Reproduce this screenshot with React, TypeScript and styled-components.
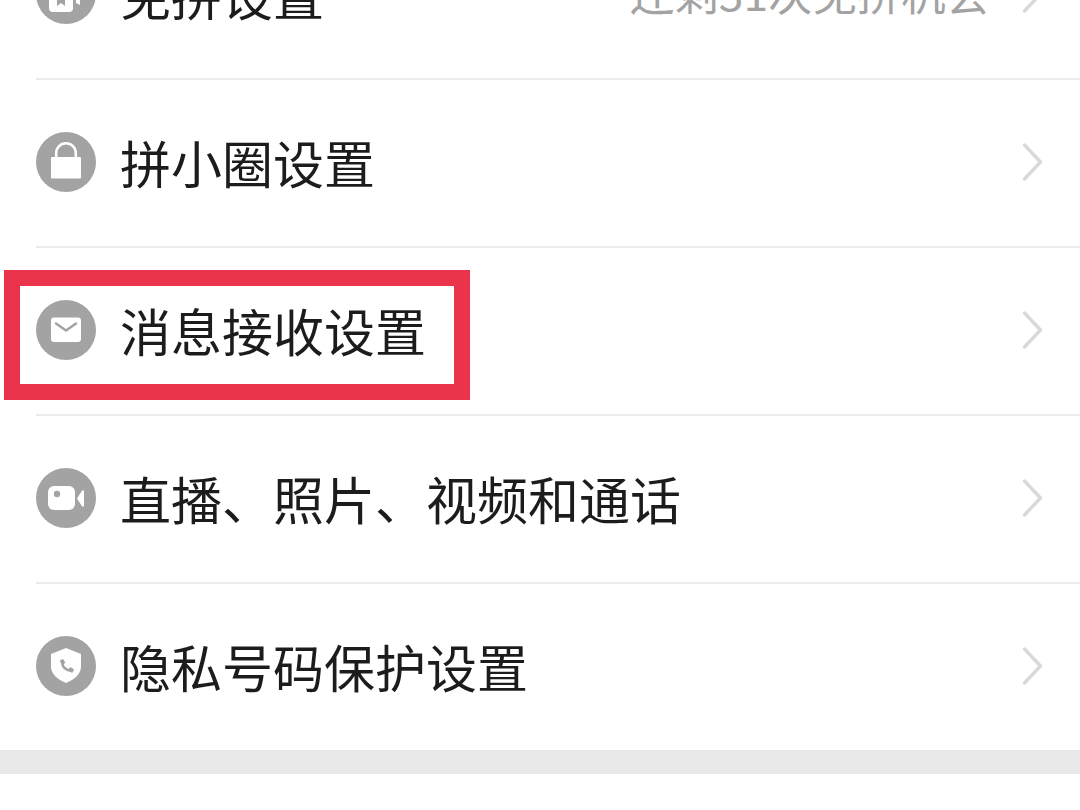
import React from "react";
import styled, { createGlobalStyle } from "styled-components";

const Global = createGlobalStyle`
  html, body { margin: 0; padding: 0; background: #fff; overflow: hidden; }
  body { font-family: "Noto Sans CJK SC", "Liberation Sans", sans-serif; }
`;

const Page = styled.div`
  width: 1080px;
  height: 810px;
  overflow: hidden;
  background: #fff;
`;

/* The reference is a scrolled list: its first row is cut off by the top edge. */
const List = styled.div`
  display: flex;
  flex-direction: column;
  margin-top: -88px;
`;

const Row = styled.div<{ $last?: boolean }>`
  position: relative;
  height: ${(p) => (p.$last ? "166px" : "168px")};
  box-sizing: border-box;
  display: flex;
  align-items: center;
  padding: 0 0 2px 36px;
  ${(p) => (p.$last ? "" : "border-bottom: 2px solid transparent;")}
`;

const Divider = styled.div`
  position: absolute;
  left: 36px;
  right: 0;
  bottom: -2px;
  height: 2px;
  background: #ebebeb;
`;

const Icon = styled.svg`
  width: 60px;
  height: 60px;
  flex: none;
  margin-right: 24px;
`;

const Label = styled.span`
  flex: 1;
  font-size: 51px;
  line-height: 60px;
  color: #1c1c1c;
  white-space: nowrap;
`;

const Hint = styled.span`
  font-size: 44.4px;
  line-height: 60px;
  color: #a3a3a3;
  margin: 0 30px 5px 0;
  white-space: nowrap;
`;

const Chevron = styled.svg`
  width: 24px;
  height: 40px;
  flex: none;
  margin: 0 36px 1px 0;
`;

const Highlight = styled.div`
  position: absolute;
  left: 4px;
  top: 22px;
  width: 466px;
  height: 130px;
  box-sizing: border-box;
  border: 16px solid #eb344c;
  pointer-events: none;
`;

const Band = styled.div`
  height: 24px;
  background: #e9e9e9;
`;

const Disc = () => <circle cx="30" cy="30" r="30" fill="#a3a3a3" />;

const Lock = () => (
  <Icon viewBox="0 0 60 60">
    <Disc />
    <path d="M20.200 25.500V21a9.800 9.800 0 0 1 19.600 0v4.500" fill="none" stroke="#fff" strokeWidth="2.500" />
    <rect x="15" y="25" width="30" height="21.500" rx="1" fill="#fff" />
  </Icon>
);

const Mail = () => (
  <Icon viewBox="0 0 60 60">
    <Disc />
    <rect x="15" y="17.500" width="30" height="24.500" rx="3" fill="#fff" />
    <path d="M20 23.500l10 7 10-7" fill="none" stroke="#a3a3a3" strokeWidth="2.500" strokeLinecap="round" strokeLinejoin="round" />
  </Icon>
);

const Video = () => (
  <Icon viewBox="0 0 60 60">
    <Disc />
    <rect x="12" y="18" width="27" height="24" rx="6" fill="#fff" />
    <circle cx="21" cy="26" r="3.200" fill="#a3a3a3" />
    <path d="M41 30.500l5-7.700c.6-.9 2-.5 2 .6v14.200c0 1.100-1.400 1.500-2 .6z" fill="#fff" />
  </Icon>
);

const Shield = () => (
  <Icon viewBox="0 0 60 60">
    <Disc />
    <path d="M30 12l15 6v12.500c0 7.500-6.500 13-15 16.500-8.500-3.500-15-9-15-16.500V18z" fill="#fff" />
    <path d="M26 26c.3 4.500 3.500 7.800 8.500 8.700" fill="none" stroke="#a3a3a3" strokeWidth="2.600" strokeLinecap="round" />
    <path d="M24.300 24.800l2.700-1.300 1.800 3.300-2.300 1.700zM32.800 33.600l1.800-2 3 2-1.500 2.800z" fill="#a3a3a3" stroke="#a3a3a3" strokeWidth="1" strokeLinejoin="round" />
  </Icon>
);

const Pass = () => (
  <Icon viewBox="0 0 60 60">
    <Disc />
    <rect x="13" y="20" width="24" height="28" rx="4" fill="#fff" />
    <path d="M40 27l4-2v16l-4-2z" fill="#fff" />
    <path d="M21 30h8v12l-4-3-4 3z" fill="#a3a3a3" />
  </Icon>
);

const Arrow = () => (
  <Chevron viewBox="0 0 24 40">
    <path d="M4.500 3l16 17-16 17" fill="none" stroke="#d9d9d9" strokeWidth="3.400" strokeLinecap="round" strokeLinejoin="round" />
  </Chevron>
);

export default function App() {
  return (
    <Page>
      <Global />
      <List>
        <Row>
          <Pass />
          <Label>免拼设置</Label>
          <Hint>还剩31次免拼机会</Hint>
          <Arrow />
          <Divider />
        </Row>
        <Row>
          <Lock />
          <Label>拼小圈设置</Label>
          <Arrow />
          <Divider />
        </Row>
        <Row>
          <Mail />
          <Label>消息接收设置</Label>
          <Arrow />
          <Highlight />
          <Divider />
        </Row>
        <Row>
          <Video />
          <Label>直播、照片、视频和通话</Label>
          <Arrow />
          <Divider />
        </Row>
        <Row $last>
          <Shield />
          <Label>隐私号码保护设置</Label>
          <Arrow />
        </Row>
        <Band />
      </List>
    </Page>
  );
}
